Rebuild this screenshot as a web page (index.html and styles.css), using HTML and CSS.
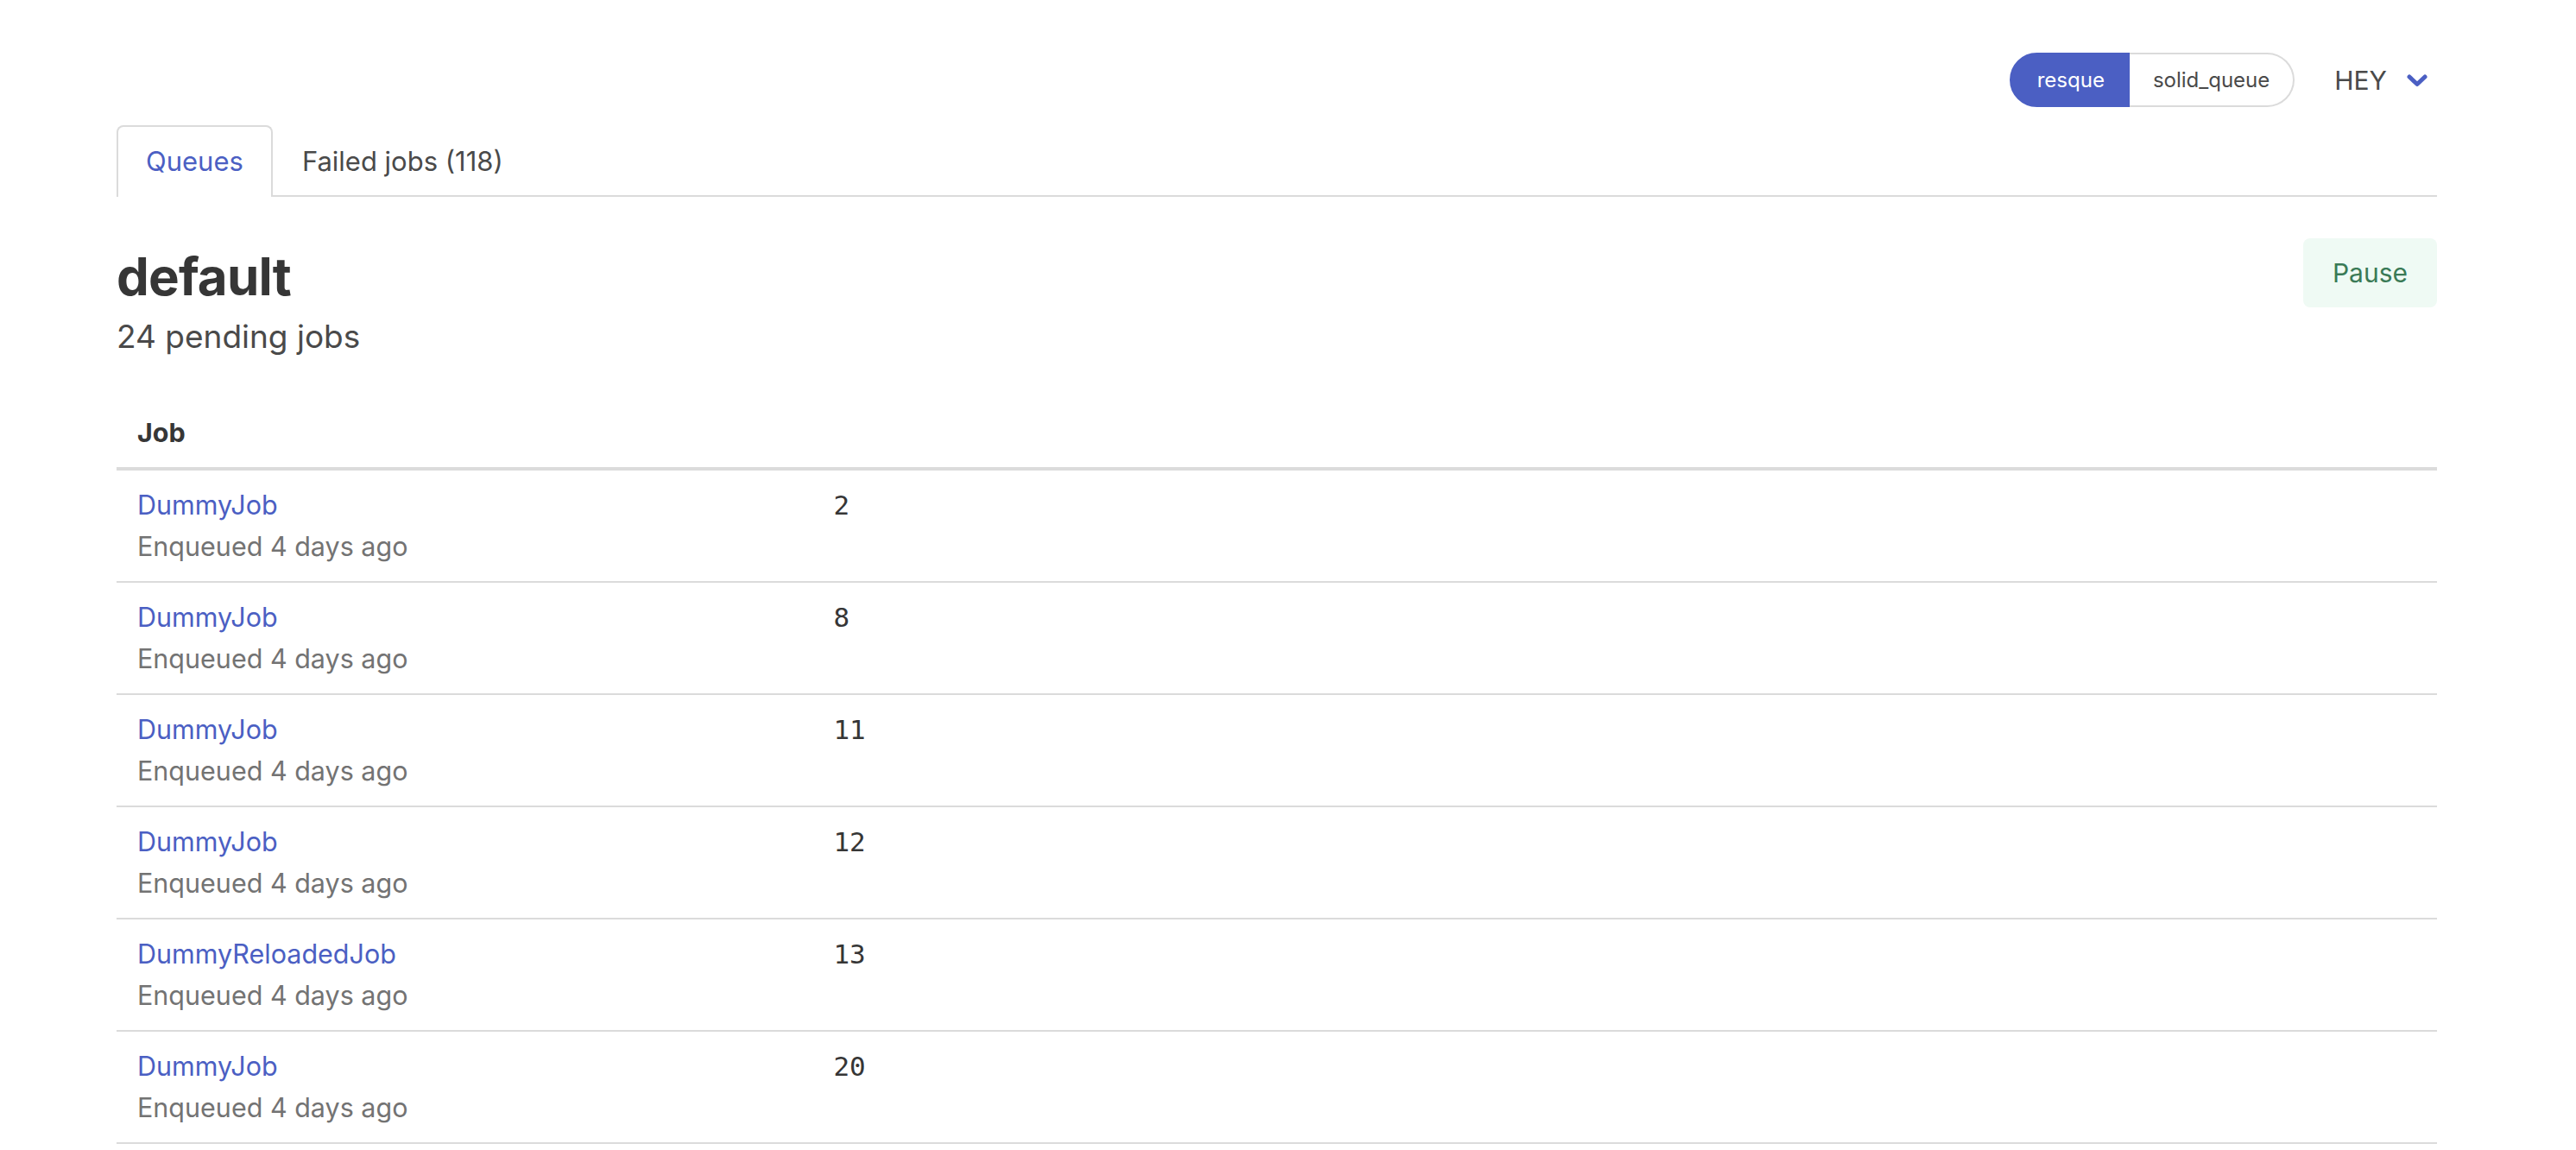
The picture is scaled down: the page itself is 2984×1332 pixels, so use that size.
FILE: index.html
```html
<!DOCTYPE html>
<html lang="en">
<head>
<meta charset="utf-8">
<title>Mission Control — Queues</title>
<link rel="stylesheet" href="styles.css">
</head>
<body>
<div class="page">
  <header class="topbar">
    <nav class="switcher">
      <a class="switch switch-active" href="#">resque</a>
      <a class="switch" href="#">solid_queue</a>
    </nav>
    <div class="app-menu">
      <span class="app-name">HEY</span>
      <svg class="chevron" width="26" height="17" viewBox="0 0 26 17" aria-hidden="true"><path d="M4 4 L13 12.5 L22 4" fill="none" stroke="#4b5fc3" stroke-width="5" stroke-linecap="round" stroke-linejoin="round"/></svg>
    </div>
  </header>

  <nav class="tabs">
    <a class="tab tab-active" href="#">Queues</a>
    <a class="tab" href="#">Failed jobs (118)</a>
  </nav>

  <section class="queue-header">
    <div class="queue-title">
      <h1>default</h1>
      <p class="subtitle">24 pending jobs</p>
    </div>
    <button class="pause-btn" type="button">Pause</button>
  </section>

  <table class="jobs">
    <thead>
      <tr><th class="col-job">Job</th><th></th></tr>
    </thead>
    <tbody>
      <tr><td><a class="job-link" href="#">DummyJob</a><div class="meta">Enqueued 4 days ago</div></td><td class="job-id">2</td></tr>
      <tr><td><a class="job-link" href="#">DummyJob</a><div class="meta">Enqueued 4 days ago</div></td><td class="job-id">8</td></tr>
      <tr><td><a class="job-link" href="#">DummyJob</a><div class="meta">Enqueued 4 days ago</div></td><td class="job-id">11</td></tr>
      <tr><td><a class="job-link" href="#">DummyJob</a><div class="meta">Enqueued 4 days ago</div></td><td class="job-id">12</td></tr>
      <tr><td><a class="job-link" href="#">DummyReloadedJob</a><div class="meta">Enqueued 4 days ago</div></td><td class="job-id">13</td></tr>
      <tr><td><a class="job-link" href="#">DummyJob</a><div class="meta">Enqueued 4 days ago</div></td><td class="job-id">20</td></tr>
    </tbody>
  </table>
</div>
</body>
</html>
```

FILE: styles.css
```css
* { box-sizing: border-box; }

html, body {
  margin: 0;
  padding: 0;
  background: #ffffff;
}

body {
  font-family: Inter, "Noto Sans", "Liberation Sans", sans-serif;
  font-size: 31px;
  line-height: 48px;
  color: #363636;
}

a { text-decoration: none; }

.page {
  margin-left: 135px;
  width: 2688px;
}

/* top bar */
.topbar {
  display: flex;
  justify-content: flex-end;
  align-items: center;
  margin-top: 61px;
  height: 63px;
  padding-right: 10px;
}

.switcher {
  display: flex;
  height: 63px;
}

.switch {
  display: block;
  height: 63px;
  line-height: 59px;
  padding: 0 27px;
  font-size: 24px;
  color: #4a4a4a;
  border: 2px solid #dbdbdb;
  border-left: none;
  border-radius: 0 999px 999px 0;
}

.switch-active {
  background: #4b5fc3;
  border-color: #4b5fc3;
  border-left: 2px solid #4b5fc3;
  color: #ffffff;
  border-radius: 999px 0 0 999px;
  padding: 0 27px 0 30px;
}

.app-menu {
  display: flex;
  align-items: center;
  margin-left: 46px;
  gap: 22px;
}

.app-name {
  font-size: 30px;
  color: #4a4a4a;
}

.chevron { display: block; margin-top: 2px; }

/* tabs */
.tabs {
  display: flex;
  margin-top: 21px;
  border-bottom: 2px solid #dbdbdb;
}

.tab {
  display: block;
  padding: 16px 32px;
  border: 2px solid transparent;
  border-bottom: none;
  border-radius: 8px 8px 0 0;
  margin-bottom: -2px;
  color: #4a4a4a;
  font-size: 31px;
  line-height: 48px;
}

.tab-active {
  color: #4b5fc3;
  border-color: #dbdbdb;
  background: #ffffff;
  padding-bottom: 17px;
}

/* queue header */
.queue-header {
  display: flex;
  justify-content: space-between;
  align-items: flex-start;
  margin-top: 48px;
}

.queue-title h1 {
  margin: 8px 0 0 0;
  font-size: 60px;
  line-height: 72px;
  font-weight: 700;
  color: #363636;
  letter-spacing: -0.8px;
}

.subtitle {
  margin: 10px 0 0 0;
  font-size: 37px;
  line-height: 48px;
  color: #4a4a4a;
}

.pause-btn {
  font-family: inherit;
  font-size: 30px;
  line-height: 48px;
  padding: 16px 34px;
  background: #effaf4;
  color: #3a7a56;
  border: none;
  border-radius: 8px;
  cursor: pointer;
}

/* table */
.jobs {
  width: 100%;
  margin-top: 47px;
  border-collapse: collapse;
  font-size: 30.5px;
}

.jobs th {
  text-align: left;
  font-weight: 700;
  color: #363636;
  padding: 16px 24px;
  border-bottom: 4px solid #dbdbdb;
}

.jobs .col-job { width: 30%; }

.jobs td {
  vertical-align: top;
  padding: 16px 24px;
  border-bottom: 2px solid #dbdbdb;
}

.job-link {
  color: #4b5fc3;
}

.meta {
  color: #737373;
}

.job-id {
  font-family: "DejaVu Sans Mono", "Liberation Mono", monospace;
  font-size: 31px;
  color: #363636;
}
```
